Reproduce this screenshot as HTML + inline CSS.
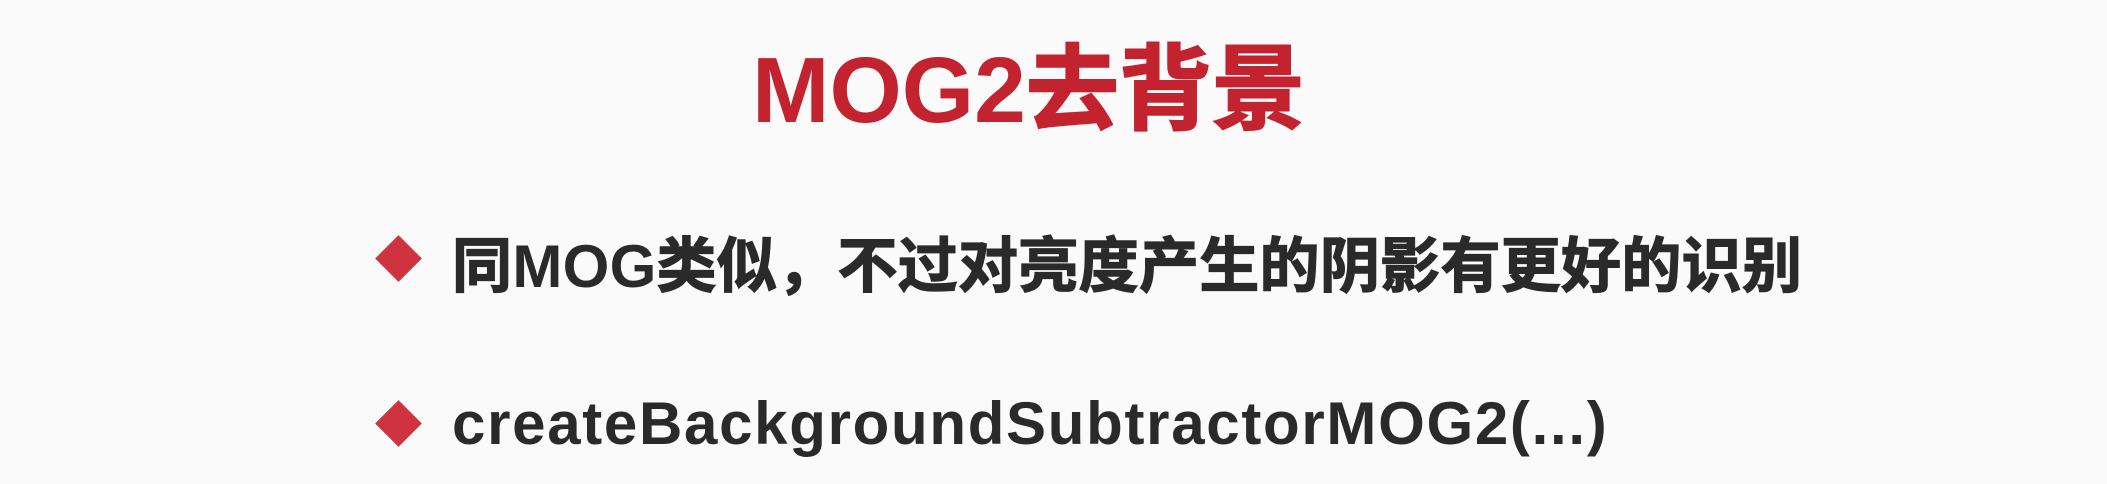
<!DOCTYPE html>
<html><head><meta charset="utf-8"><style>
html,body{margin:0;padding:0;}
body{width:2107px;height:484px;background:#fafafa;position:relative;overflow:hidden;font-family:"Liberation Sans","Noto Sans CJK SC",sans-serif;font-weight:bold;}
.t{position:absolute;white-space:nowrap;}
.title{left:752px;top:44px;font-size:93px;line-height:92px;color:#c3232f;}
.l{font-size:60px;line-height:60px;color:#2a2a2a;left:452px;}
.c{-webkit-text-stroke:1.3px currentColor;}
.title .c{-webkit-text-stroke:2px currentColor;}
.d{position:absolute;width:33px;height:33px;background:#cf3340;transform:rotate(45deg);}
</style></head><body>
<div class="t title">MOG2<span class="c">去背景</span></div>
<div class="d" style="left:382px;top:242px;"></div>
<div class="t l" style="top:237px;letter-spacing:0.3px;"><span class="c">同</span>MOG<span class="c">类似，不过对亮度产生的阴影有更好的识别</span></div>
<div class="d" style="left:382px;top:407px;"></div>
<div class="t l" style="top:394px;letter-spacing:1.7px;">createBackgroundSubtractorMOG2(...)</div>
</body></html>
